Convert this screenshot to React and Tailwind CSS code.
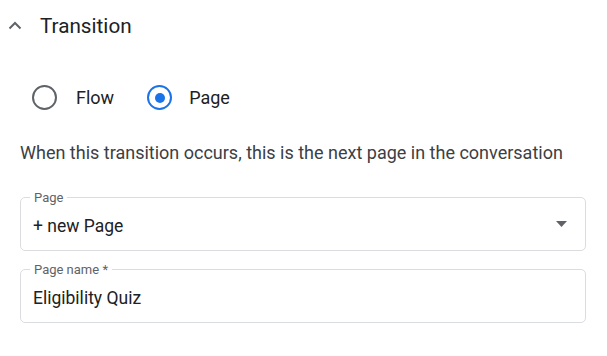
export default function App() {
  return (
    <div className="w-[607px] h-[356px] bg-white text-[#202124] font-['Roboto',sans-serif] overflow-hidden">
      <div className="flex items-center h-[52px] pl-[8px]">
        <svg width="14" height="9" viewBox="0 0 14 9" className="mb-[2px]">
          <path d="M1.5 7.5 L7 2 L12.5 7.5" fill="none" stroke="#5f6368" strokeWidth="2" />
        </svg>
        <span className="ml-[18px] text-[20.7px] leading-none">Transition</span>
      </div>

      <div className="flex items-center h-[91px] pl-[32px]">
        <label className="flex items-center">
          <span className="w-[25px] h-[25px] rounded-full border-[2.5px] border-[#5f6368]" />
          <span className="ml-[19px] text-[18px]">Flow</span>
        </label>
        <label className="flex items-center ml-[33px]">
          <span className="w-[25px] h-[25px] rounded-full border-[2.5px] border-[#1a73e8] flex items-center justify-center">
            <span className="w-[10px] h-[10px] rounded-full bg-[#1a73e8]" />
          </span>
          <span className="ml-[17px] text-[18px]">Page</span>
        </label>
      </div>

      <p className="pl-[20px] text-[18px] text-[#3c4043] leading-[24px] -mt-[2px]">
        When this transition occurs, this is the next page in the conversation
      </p>

      <div className="pl-[20px] pr-[21px] mt-[26px] flex flex-col gap-[12px]">
        <fieldset className="border border-[#dadce0] rounded-[5px] h-[60px] px-[8px] pb-0">
          <legend className="px-[4px] ml-[1px] text-[13px] text-[#5f6368] leading-[13px]">Page</legend>
          <div className="flex items-center justify-between h-[45px] pl-[4px] pr-[10px]">
            <span className="text-[17.5px]">+ new Page</span>
            <svg width="11" height="6" viewBox="0 0 11 6" className="mb-[6px]">
              <path d="M0 0 L11 0 L5.5 6 Z" fill="#5f6368" />
            </svg>
          </div>
        </fieldset>
        <fieldset className="border border-[#dadce0] rounded-[5px] h-[60px] px-[8px] pb-0">
          <legend className="px-[4px] ml-[1px] text-[13px] text-[#5f6368] leading-[13px]">Page name *</legend>
          <div className="flex items-center h-[45px] pl-[4px]">
            <span className="text-[17.5px]">Eligibility Quiz</span>
          </div>
        </fieldset>
      </div>
    </div>
  );
}
